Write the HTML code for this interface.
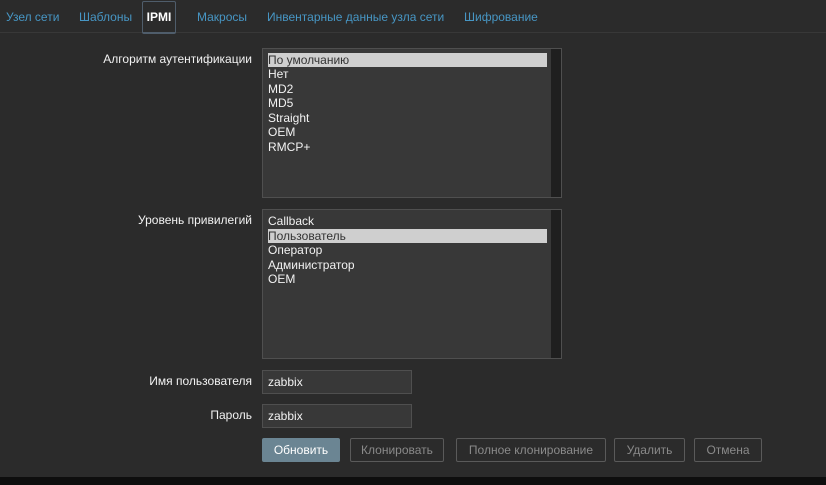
<!DOCTYPE html><html><head><style>
body{margin:0;width:826px;height:485px;background:#2b2b2b;font-family:"Liberation Sans",sans-serif;font-size:12px;color:#f2f2f2;position:relative;overflow:hidden}
.tabs{position:absolute;top:0;left:0;width:826px;height:32px;border-bottom:1px solid #383838}
.tab{position:absolute;top:10px;color:#4796c4}
.act{position:absolute;left:142px;top:1px;width:32px;height:30px;border:1px solid #4f5d6b;border-bottom:2px solid #4f5d6b;border-radius:2px;color:#fff;font-weight:bold;text-align:center;line-height:30px}
.lbl{position:absolute;right:574px;text-align:right;color:#f2f2f2}
.lb{position:absolute;left:262px;width:298px;height:148px;border:1px solid #4f4f4f;background:#383838}
.lb .sb{position:absolute;right:0;top:0;width:10px;height:148px;background:#1f1f1f}
.lb div.i{position:absolute;left:5px;height:14px;line-height:14px;font-size:12px}
.sel{background:#cfcfcf;color:#333;width:279px}
.in{position:absolute;left:262px;width:148px;height:22px;border:1px solid #4f4f4f;background:#383838;line-height:22px;text-indent:5px}
.btn{position:absolute;top:438px;height:22px;border:1px solid #5a5a5a;border-radius:2px;line-height:22px;text-align:center;color:#8a8a8a}
.bot{position:absolute;left:0;top:477px;width:826px;height:8px;background:#0e0e0e}
</style></head><body>
<div class="tabs">
<span class="tab" style="left:6px">Узел сети</span>
<span class="tab" style="left:79px">Шаблоны</span>
<div class="act">IPMI</div>
<span class="tab" style="left:197px">Макросы</span>
<span class="tab" style="left:267px">Инвентарные данные узла сети</span>
<span class="tab" style="left:464px">Шифрование</span>
</div>
<div class="lbl" style="top:52px">Алгоритм аутентификации</div>
<div class="lb" style="top:48px"><div class="sb"></div>
<div class="i sel" style="top:4px">По умолчанию</div>
<div class="i" style="top:18px">Нет</div><div class="i" style="top:33px">MD2</div><div class="i" style="top:47px">MD5</div><div class="i" style="top:62px">Straight</div><div class="i" style="top:76px">OEM</div><div class="i" style="top:91px">RMCP+</div></div>
<div class="lbl" style="top:213px">Уровень привилегий</div>
<div class="lb" style="top:209px"><div class="sb"></div>
<div class="i" style="top:4px">Callback</div>
<div class="i sel" style="top:19px">Пользователь</div>
<div class="i" style="top:33px">Оператор</div><div class="i" style="top:48px">Администратор</div><div class="i" style="top:62px">OEM</div></div>
<div class="lbl" style="top:374px">Имя пользователя</div>
<div class="in" style="top:370px">zabbix</div>
<div class="lbl" style="top:408px">Пароль</div>
<div class="in" style="top:404px">zabbix</div>
<div class="btn" style="left:262px;width:76px;background:#6b8593;border-color:#6b8593;color:#fff">Обновить</div>
<div class="btn" style="left:350px;width:92px">Клонировать</div>
<div class="btn" style="left:456px;width:148px">Полное клонирование</div>
<div class="btn" style="left:614px;width:69px">Удалить</div>
<div class="btn" style="left:694px;width:66px">Отмена</div>
<div class="bot"></div>
</body></html>
